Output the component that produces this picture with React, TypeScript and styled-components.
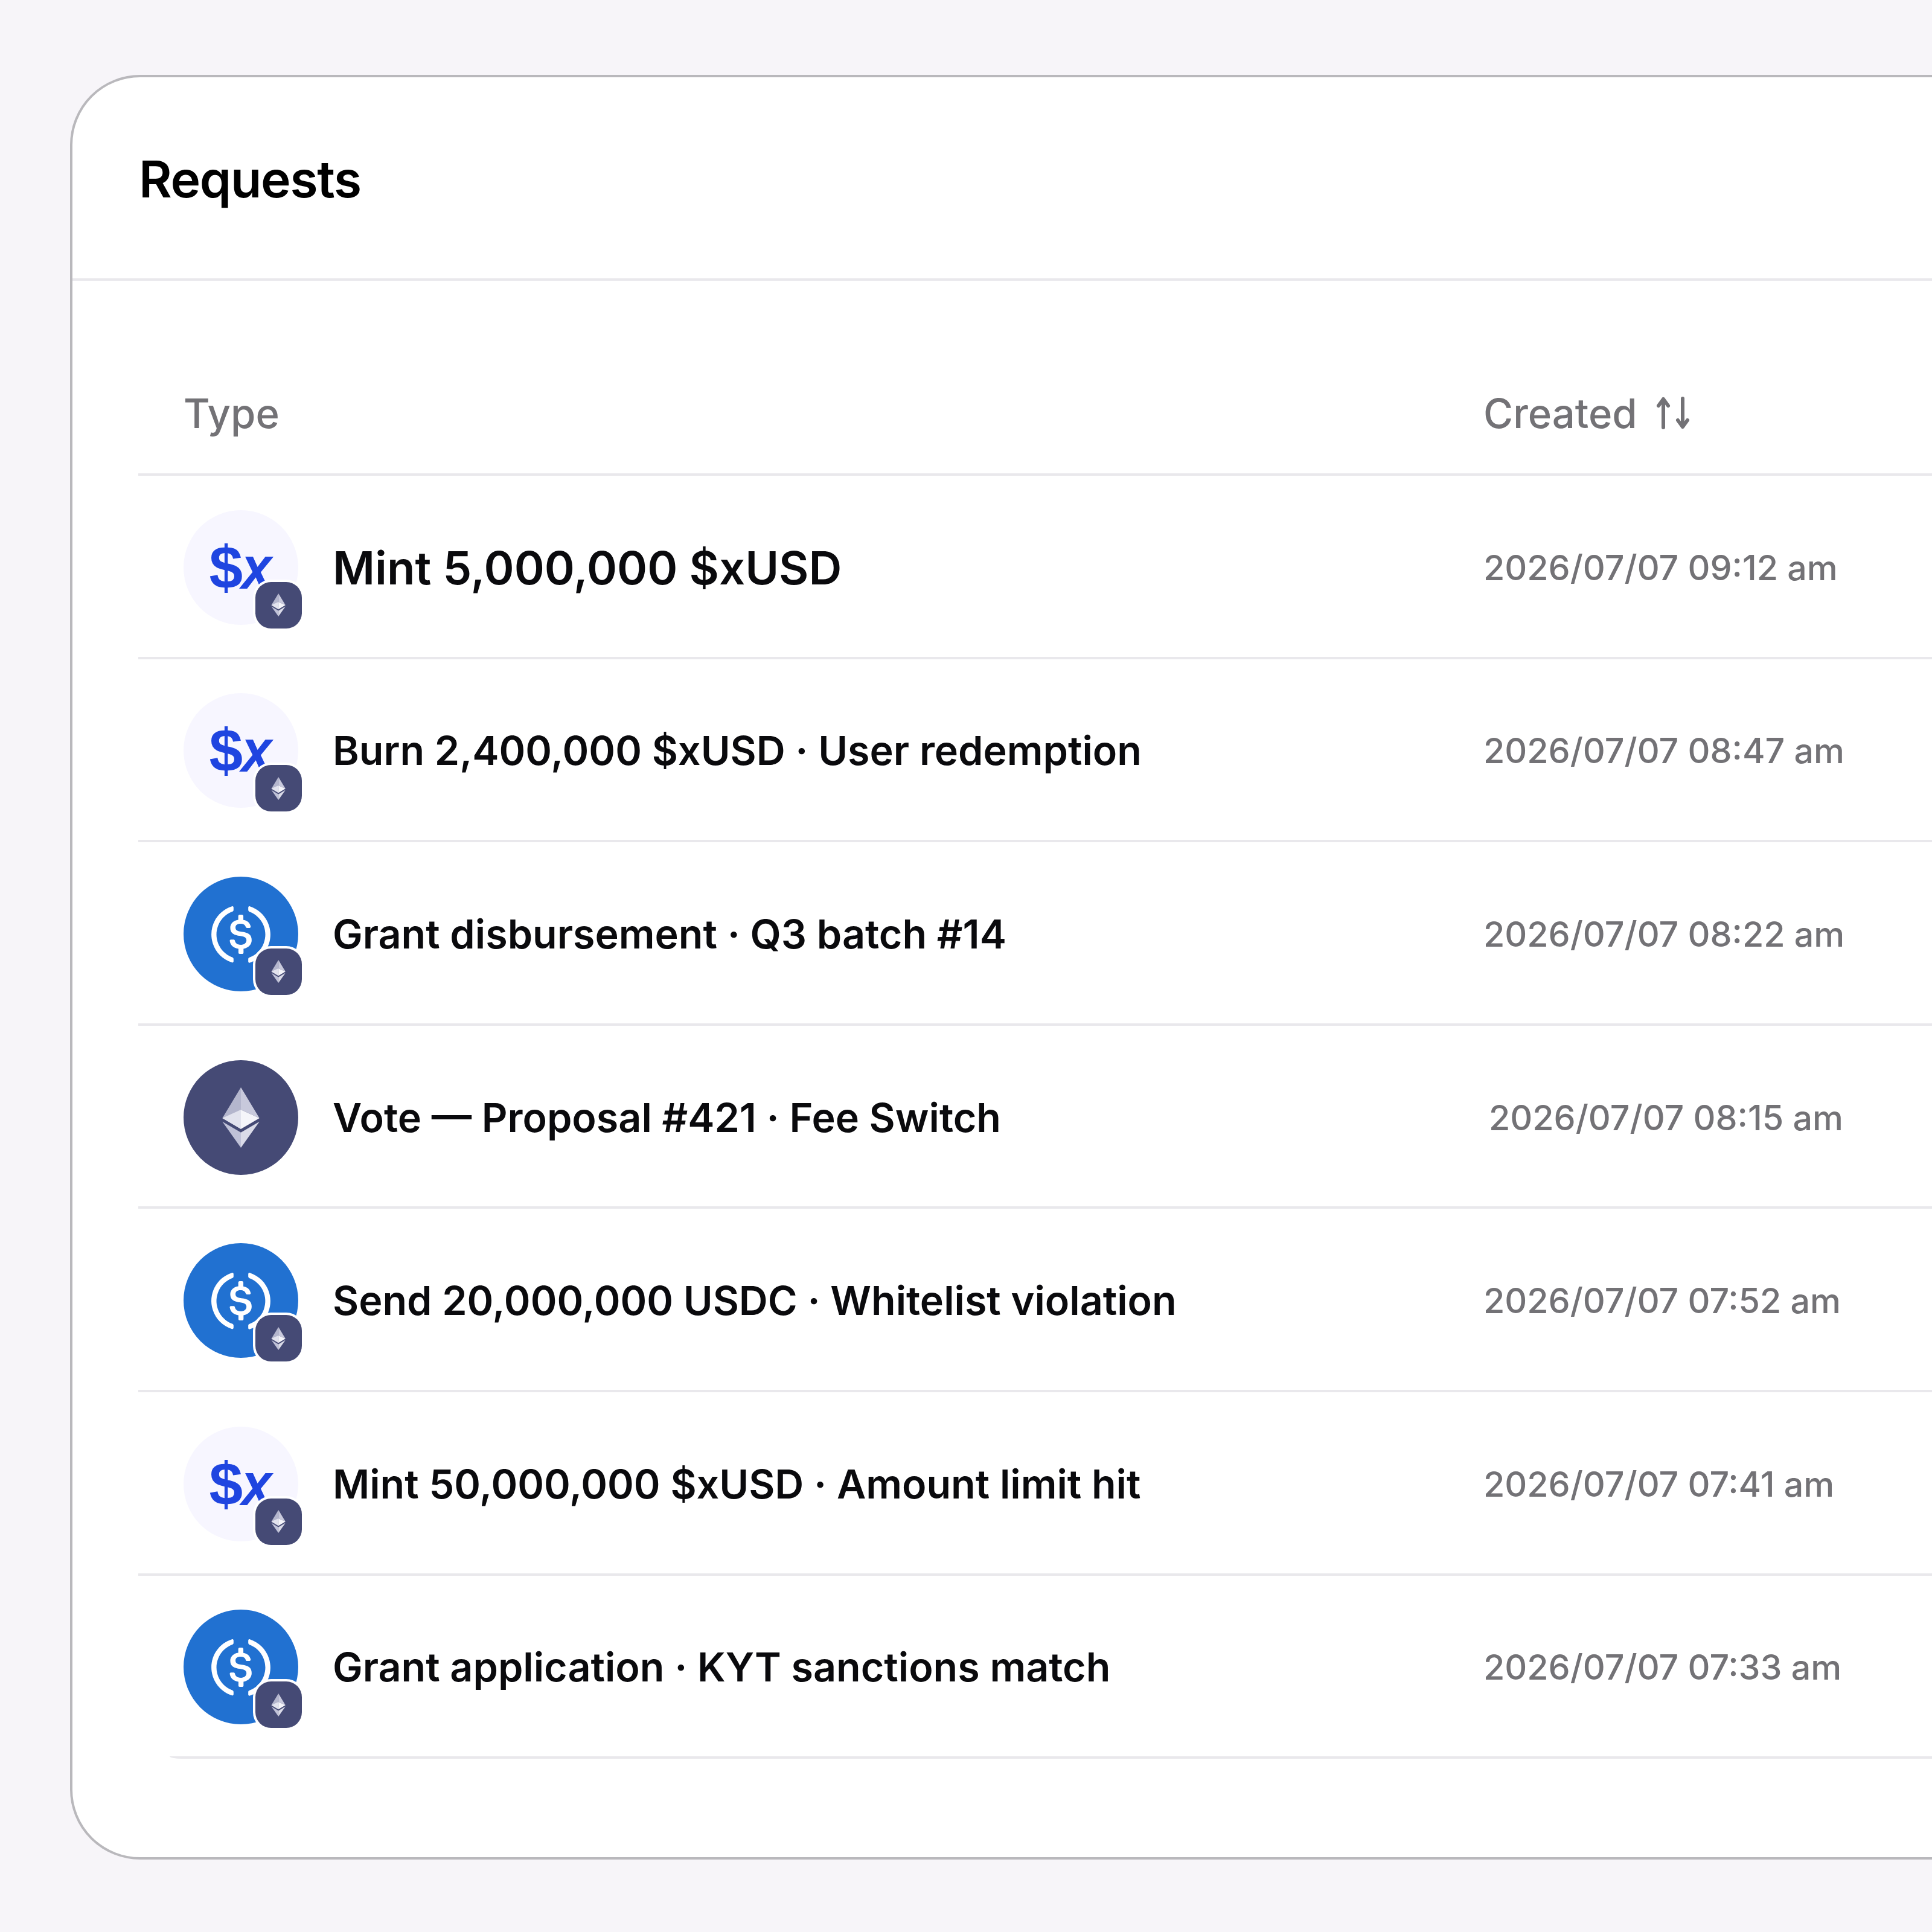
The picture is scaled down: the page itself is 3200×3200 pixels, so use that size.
import styled, { createGlobalStyle } from "styled-components";

const GlobalStyle = createGlobalStyle`
  html, body {
    margin: 0;
    padding: 0;
    background: #f7f5f9;
  }
  #root {
    width: 3200px;
    height: 3200px;
    overflow: hidden;
  }
`;

const Page = styled.div`
  box-sizing: border-box;
  width: 3200px;
  height: 3200px;
  padding: 124px 0 0 116px;
  background: #f7f5f9;
  font-family: Inter, "Liberation Sans", sans-serif;
`;

const Card = styled.section`
  box-sizing: border-box;
  width: 3400px;
  height: 2956px;
  background: #fff;
  border: 4px solid #b9b8bc;
  border-radius: 116px;
`;

const CardHeader = styled.header`
  box-sizing: border-box;
  display: flex;
  align-items: center;
  height: 337px;
  padding: 4px 0 0 110px;
  border-bottom: 4px solid #e9e8ec;
`;

const Title = styled.h1`
  margin: 0;
  font-size: 84px;
  font-weight: 600;
  letter-spacing: -1.3px;
  color: #000;
`;

const Table = styled.div`
  margin: 121px 0 0 109px;
`;

const HeadRow = styled.div`
  box-sizing: border-box;
  display: grid;
  grid-template-columns: 2153px 1fr;
  align-items: center;
  height: 202px;
  padding-bottom: 2px;
  border-bottom: 4px solid #e9e8ec;
`;

const HeadCell = styled.div`
  display: flex;
  align-items: center;
  gap: 30px;
  padding-left: 75px;
  font-size: 67px;
  font-weight: 500;
  color: #737276;
`;

const Row = styled.div<{ $last?: boolean }>`
  box-sizing: border-box;
  display: grid;
  grid-template-columns: 2153px 1fr;
  align-items: center;
  height: ${(p) => (p.$last ? "299.6px" : "303.6px")};
  padding-top: 4px;
  border-bottom: ${(p) => (p.$last ? "0" : "4px solid #e9e8ec")};
`;

/* the bottom line of the table stops short of the row and tapers off on the left */
const TableEnd = styled.div`
  height: 4px;
  margin-left: 52px;
  background: #e9e8ec;
  border-bottom-left-radius: 20px 4px;
`;

const TypeCell = styled.div`
  display: flex;
  align-items: center;
  gap: 57px;
  padding-left: 75px;
`;

const Avatar = styled.div<{ $bg: string }>`
  position: relative;
  display: flex;
  align-items: center;
  justify-content: center;
  flex: none;
  width: 190px;
  height: 190px;
  border-radius: 50%;
  background: ${(p) => p.$bg};
`;

const Badge = styled.span`
  position: absolute;
  right: -6px;
  bottom: -6px;
  display: flex;
  align-items: center;
  justify-content: center;
  width: 77px;
  height: 77px;
  border-radius: 26px;
  background: #454a75;
  box-shadow: 0 0 0 4px #fff;
`;

const XMark = styled.span`
  display: flex;
  align-items: baseline;
  margin-left: 4px;
  font-family: "Liberation Sans", Arial, sans-serif;
  font-size: 100px;
  font-weight: 700;
  line-height: 1;
  color: #1f45e0;

  i {
    display: inline-block;
    margin-left: -2px;
    font-style: italic;
    transform: scaleX(0.9);
    transform-origin: left;
  }
`;

const Label = styled.span<{ $large?: boolean }>`
  font-size: ${(p) => (p.$large ? "76px" : "66.4px")};
  font-weight: 600;
  color: #0a0a0d;
`;

const DateCell = styled.div<{ $inset?: number }>`
  padding-left: ${(p) => 75 + (p.$inset ?? 0)}px;
  font-size: 57.3px;
  font-weight: 500;
  color: #737276;
`;

function EthIcon({ size }: { size: number }) {
  return (
    <svg width={size * 0.64} height={size} viewBox="0 0 256 417">
      <path fill="#b4b6cd" d="M128 0 0 212.3l128 75.7V154.2z" />
      <path fill="#c8c9dc" d="M128 0l128 212.3L128 154.2z" />
      <path fill="#e2e3ee" d="M0 212.3 128 288V154.2z" />
      <path fill="#f5f5fa" d="M128 288l128-75.7-128-58.1z" />
      <path fill="#c0c2d8" d="M128 417V312.2L0 236.6z" />
      <path fill="#dadbe8" d="M128 312.2V417l128-180.4z" />
    </svg>
  );
}

function UsdcIcon() {
  return (
    <svg width="130" height="130" viewBox="0 0 2000 2000" fill="#fff">
      <path d="M1275 1158.33c0-145.83-87.5-195.83-262.5-216.66-125-16.67-150-50-150-108.34s41.67-95.83 125-95.83c75 0 116.67 25 137.5 87.5 4.17 12.5 16.67 20.83 29.17 20.83h66.66c16.67 0 29.17-12.5 29.17-29.16v-4.17c-16.67-91.67-91.67-162.5-187.5-170.83v-100c0-16.67-12.5-29.17-33.33-33.34h-62.5c-16.67 0-29.17 12.5-33.34 33.34v95.83c-125 16.67-204.16 100-204.16 204.17 0 137.5 83.33 187.5 258.33 208.33 116.67 20.83 154.17 45.83 154.17 112.5s-58.34 112.5-137.5 112.5c-108.34 0-145.84-45.84-158.34-108.34-4.16-16.66-16.66-25-29.16-25h-70.84c-16.66 0-29.16 12.5-29.16 29.17v4.17c16.66 104.16 83.33 179.16 220.83 200v100c0 16.66 12.5 29.16 33.33 33.33h62.5c16.67 0 29.17-12.5 33.34-33.33v-100c125-20.84 208.33-108.34 208.33-220.84z" />
      <path d="M787.5 1595.83c-325-116.66-491.67-479.16-370.83-800 62.5-175 200-308.33 370.83-370.83 16.67-8.33 25-20.83 25-41.67V325c0-16.67-8.33-29.17-25-33.33-4.17 0-12.5 0-16.67 4.16-395.83 125-612.5 545.84-487.5 941.67 75 233.33 254.17 412.5 487.5 487.5 16.67 8.33 33.34 0 37.5-16.67 4.17-4.16 4.17-8.33 4.17-16.66v-58.34c0-12.5-12.5-29.16-25-37.5zM1229.17 295.83c-16.67-8.33-33.34 0-37.5 16.67-4.17 4.17-4.17 8.33-4.17 16.67v58.33c0 16.67 12.5 33.33 25 41.67 325 116.66 491.67 479.16 370.83 800-62.5 175-200 308.33-370.83 370.83-16.67 8.33-25 20.83-25 41.67V1700c0 16.67 8.33 29.17 25 33.33 4.17 0 12.5 0 16.67-4.16 395.83-125 612.5-545.84 487.5-941.67-75-237.5-258.34-416.67-487.5-491.67z" />
    </svg>
  );
}

function SortIcon() {
  return (
    <svg width="58" height="54" viewBox="0 0 58 54" fill="none" stroke="#737276" strokeWidth="6" strokeLinecap="round" strokeLinejoin="round">
      <path d="M13 51V4M5 15 13 4l8 11" />
      <path d="M45 3v47M37 39l8 11 8-11" />
    </svg>
  );
}

type Kind = "xusd" | "usdc" | "eth";

const rows: { kind: Kind; label: string; date: string; large?: boolean; inset?: number }[] = [
  { kind: "xusd", label: "Mint 5,000,000 $xUSD", date: "2026/07/07 09:12 am", large: true },
  { kind: "xusd", label: "Burn 2,400,000 $xUSD · User redemption", date: "2026/07/07 08:47 am" },
  { kind: "usdc", label: "Grant disbursement · Q3 batch #14", date: "2026/07/07 08:22 am" },
  { kind: "eth", label: "Vote — Proposal #421 · Fee Switch", date: "2026/07/07 08:15 am", inset: 9 },
  { kind: "usdc", label: "Send 20,000,000 USDC · Whitelist violation", date: "2026/07/07 07:52 am" },
  { kind: "xusd", label: "Mint 50,000,000 $xUSD · Amount limit hit", date: "2026/07/07 07:41 am" },
  { kind: "usdc", label: "Grant application · KYT sanctions match", date: "2026/07/07 07:33 am" },
];

const avatarBg: Record<Kind, string> = {
  xusd: "#f7f6ff",
  usdc: "#2171d1",
  eth: "#454a75",
};

function TokenAvatar({ kind }: { kind: Kind }) {
  return (
    <Avatar $bg={avatarBg[kind]}>
      {kind === "xusd" && (
        <XMark>
          $<i>x</i>
        </XMark>
      )}
      {kind === "usdc" && <UsdcIcon />}
      {kind === "eth" && <EthIcon size={100} />}
      {kind !== "eth" && (
        <Badge>
          <EthIcon size={38} />
        </Badge>
      )}
    </Avatar>
  );
}

export default function App() {
  return (
    <Page>
      <GlobalStyle />
      <Card>
        <CardHeader>
          <Title>Requests</Title>
        </CardHeader>
        <Table>
          <HeadRow>
            <HeadCell>Type</HeadCell>
            <HeadCell>
              Created
              <SortIcon />
            </HeadCell>
          </HeadRow>
          {rows.map((row, i) => (
            <Row key={row.label} $last={i === rows.length - 1}>
              <TypeCell>
                <TokenAvatar kind={row.kind} />
                <Label $large={row.large}>{row.label}</Label>
              </TypeCell>
              <DateCell $inset={row.inset}>{row.date}</DateCell>
            </Row>
          ))}
          <TableEnd />
        </Table>
      </Card>
    </Page>
  );
}
